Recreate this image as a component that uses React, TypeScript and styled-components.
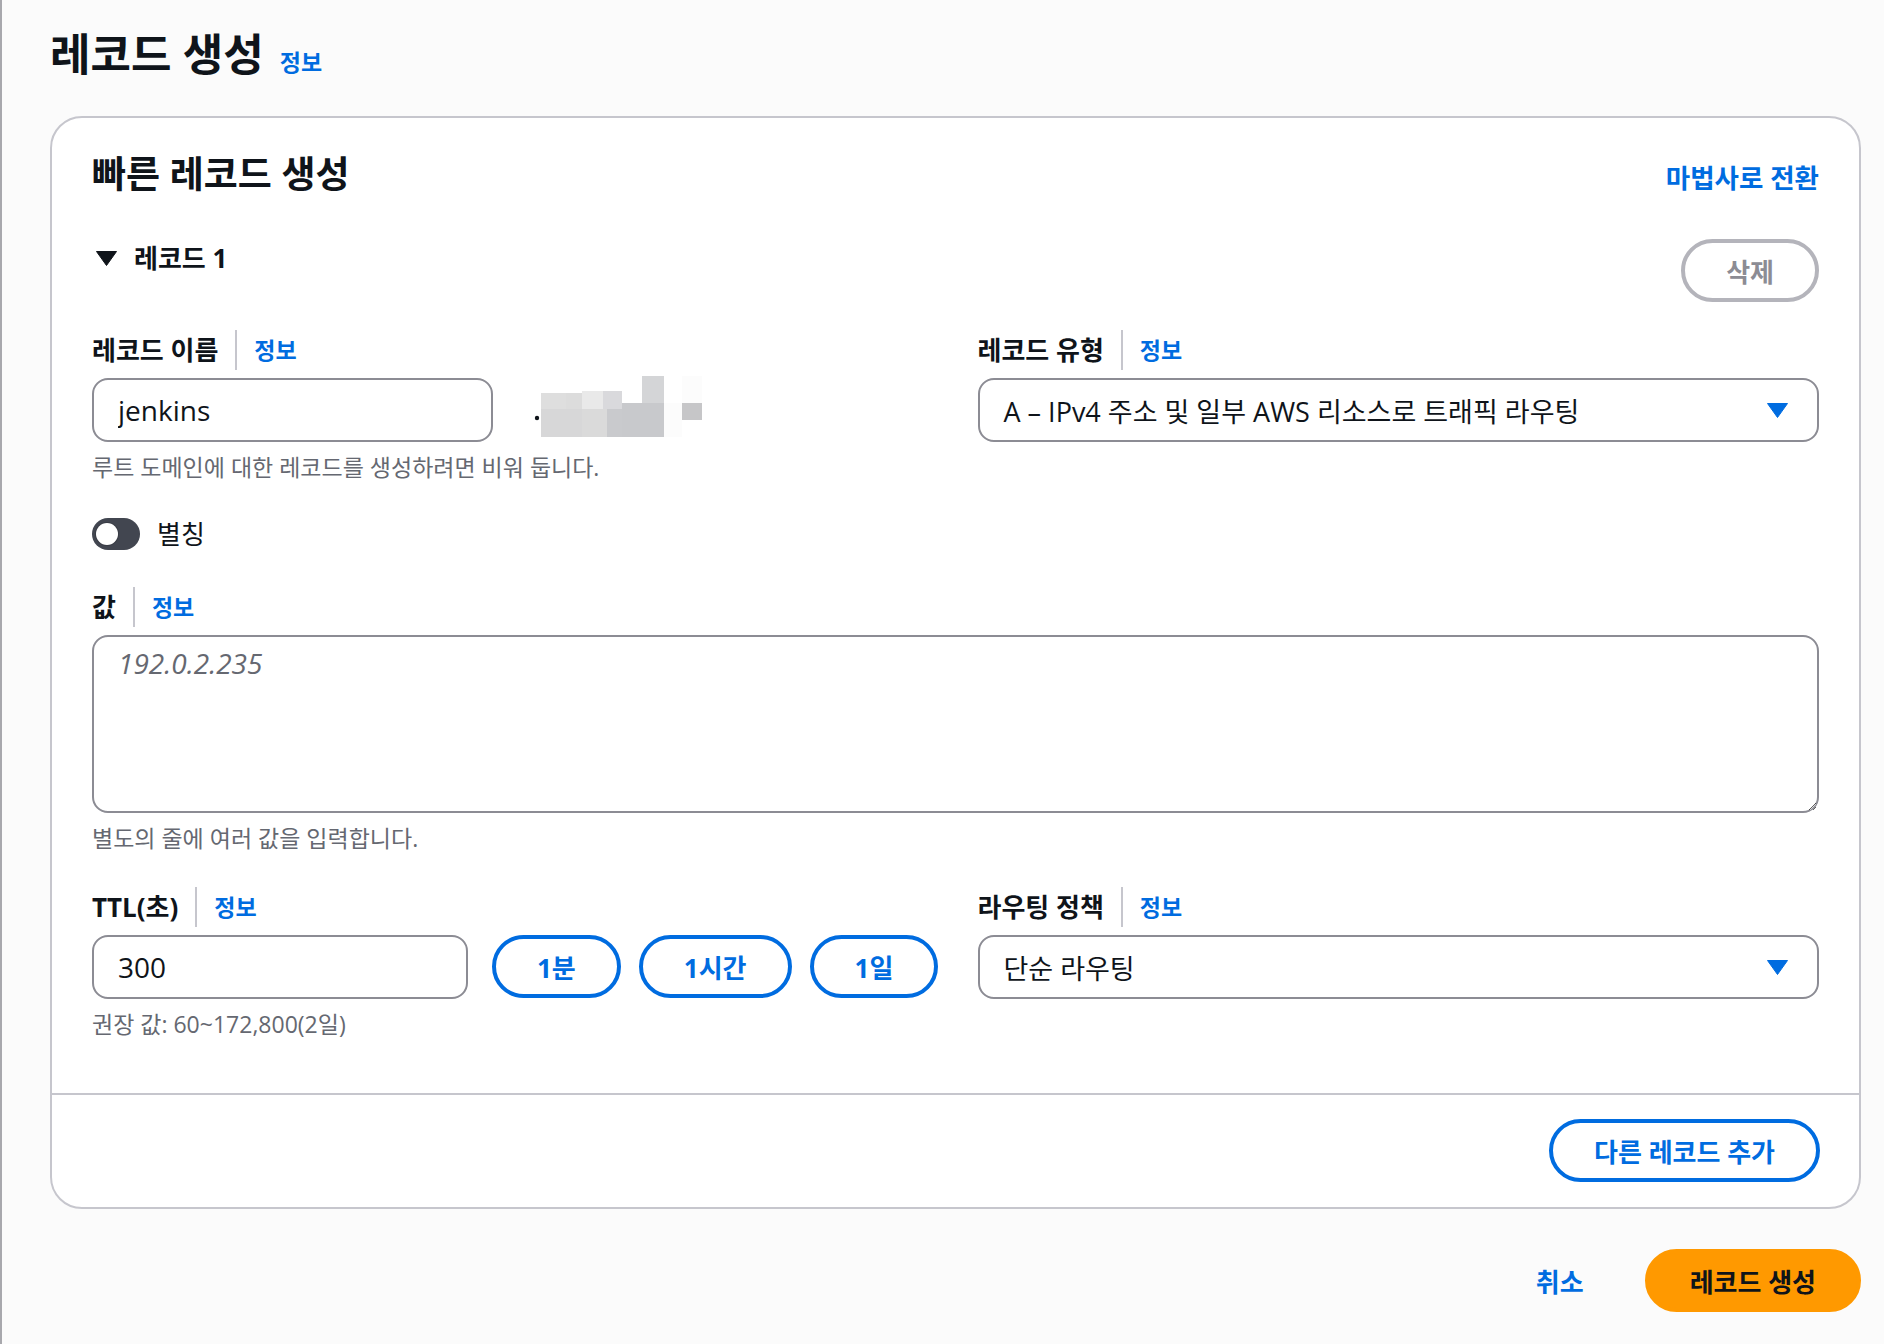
import React from 'react';
import styled, { createGlobalStyle } from 'styled-components';

const GlobalStyle = createGlobalStyle`
  * { box-sizing: border-box; }
  html, body {
    margin: 0;
    background: #fbfbfb;
  }
  body {
    font-family: "Open Sans", "Noto Sans CJK KR", sans-serif;
    color: #0f141a;
  }
`;

const Page = styled.div`
  min-height: 1344px;
  border-left: 2px solid #a8a8ad;
  padding: 27px 23px 0 48px;
`;

const TitleRow = styled.div`
  display: flex;
  align-items: baseline;
  gap: 16px;
`;

const PageTitle = styled.h1`
  margin: 0;
  font-size: 44px;
  line-height: 54px;
  font-weight: 700;
`;

const InfoLink = styled.a`
  font-size: 23px;
  line-height: 32px;
  font-weight: 700;
  color: #006ce0;
  text-decoration: none;
  cursor: pointer;
`;

const Card = styled.section`
  margin-top: 35px;
  background: #fff;
  border: 2px solid #c6c6cd;
  border-radius: 32px;
  overflow: hidden;
`;

const CardBody = styled.div`
  padding: 32px 40px 54px;
`;

const CardHeader = styled.div`
  display: flex;
  justify-content: space-between;
  align-items: baseline;
`;

const CardTitle = styled.h2`
  margin: 0;
  font-size: 37px;
  line-height: 47px;
  font-weight: 700;
`;

const HeaderLink = styled.a`
  font-size: 26.5px;
  font-weight: 700;
  color: #006ce0;
  text-decoration: none;
  cursor: pointer;
`;

const RecordHeader = styled.div`
  display: flex;
  justify-content: space-between;
  align-items: flex-start;
  margin-top: 42px;
`;

const RecordToggle = styled.div`
  display: flex;
  align-items: center;
  gap: 17px;
  padding-left: 4px;
  font-size: 26px;
  line-height: 38px;
  font-weight: 700;
`;

const PillButton = styled.button<{ $tone?: 'normal' | 'disabled' | 'primary' }>`
  flex-shrink: 0;
  height: 63px;
  padding: 0 41px;
  border-radius: 32px;
  border: 4px solid
    ${p => (p.$tone === 'disabled' ? '#b4b4bb' : p.$tone === 'primary' ? '#ff9900' : '#006ce0')};
  background: ${p => (p.$tone === 'primary' ? '#ff9900' : '#fff')};
  color: ${p => (p.$tone === 'disabled' ? '#8c8c94' : p.$tone === 'primary' ? '#0f141a' : '#006ce0')};
  font-family: inherit;
  font-size: 26px;
  font-weight: 700;
  white-space: nowrap;
  cursor: ${p => (p.$tone === 'disabled' ? 'default' : 'pointer')};
`;

const Grid = styled.div<{ $gap: number }>`
  display: grid;
  grid-template-columns: minmax(0, 1fr) minmax(0, 1fr);
  column-gap: 44px;
  margin-top: ${p => p.$gap}px;
`;

const Field = styled.div<{ $gap?: number }>`
  display: flex;
  flex-direction: column;
  min-width: 0;
  margin-top: ${p => p.$gap ?? 0}px;
`;

const LabelRow = styled.div`
  display: flex;
  align-items: center;
  height: 32px;
  margin-bottom: 12px;
`;

const Label = styled.label`
  font-size: 26px;
  line-height: 32px;
  font-weight: 700;
`;

const LabelDivider = styled.span`
  width: 2px;
  height: 40px;
  background: #c6c6cd;
  margin: 0 17px;
`;

const ControlRow = styled.div<{ $gap?: number }>`
  display: flex;
  align-items: flex-start;
  gap: ${p => p.$gap ?? 0}px;
`;

const TextInput = styled.input<{ $width: number; $after?: number }>`
  flex-shrink: 0;
  width: ${p => p.$width}px;
  height: 64px;
  margin-right: ${p => p.$after ?? 0}px;
  padding: 0 24px;
  border: 2px solid #8c8c94;
  border-radius: 16px;
  background: #fff;
  font-family: inherit;
  font-size: 28px;
  color: #0f141a;
  outline: none;
`;

const SelectBox = styled.div`
  display: flex;
  align-items: center;
  justify-content: space-between;
  height: 64px;
  padding: 0 29px 0 24px;
  border: 2px solid #8c8c94;
  border-radius: 16px;
  background: #fff;
  font-size: 27px;
  cursor: pointer;
`;

const TextArea = styled.textarea`
  display: block;
  width: 100%;
  height: 178px;
  padding: 7px 24px;
  border: 2px solid #8c8c94;
  border-radius: 16px;
  font-family: inherit;
  font-size: 28px;
  line-height: 38px;
  color: #0f141a;
  outline: none;

  &::placeholder {
    color: #656871;
    font-style: italic;
  }
`;

const Hint = styled.div`
  margin-top: 10px;
  font-size: 23px;
  line-height: 30px;
  color: #656871;
`;

const ToggleRow = styled.div`
  display: flex;
  align-items: center;
  gap: 17px;
  margin-top: 36px;
  font-size: 26px;
  line-height: 32px;
`;

const Track = styled.span`
  position: relative;
  width: 48px;
  height: 32px;
  border-radius: 16px;
  background: #424650;
`;

const Knob = styled.span`
  position: absolute;
  left: 4px;
  top: 5px;
  width: 22px;
  height: 22px;
  border-radius: 50%;
  background: #fff;
  box-shadow: 0 0 0 1px rgba(0, 0, 0, 0.15);
`;

const Mosaic = styled.svg`
  flex-shrink: 0;
  margin-left: 40px;
  margin-top: -2px;
`;

const CardFooter = styled.div`
  display: flex;
  justify-content: flex-end;
  border-top: 2px solid #c6c6cd;
  padding: 24px 39px 25px;
`;

const Actions = styled.div`
  display: flex;
  justify-content: flex-end;
  align-items: center;
  gap: 61px;
  margin-top: 40px;
`;

const CancelLink = styled.a`
  font-size: 26px;
  font-weight: 700;
  color: #006ce0;
  cursor: pointer;
`;

function Caret({ color }: { color: string }) {
  return (
    <svg width="21" height="15" viewBox="0 0 21 15">
      <polygon points="0.5,0.5 20.5,0.5 10.5,14.5" fill={color} stroke={color} strokeLinejoin="round" />
    </svg>
  );
}

const blocks = [
  { x: 109, y: 0, w: 22, h: 27, c: '#d4d5d7' },
  { x: 149, y: 0, w: 20, h: 27, c: '#fcfcfc' },
  { x: 8, y: 17, w: 25, h: 16, c: '#dedede' },
  { x: 33, y: 17, w: 16, h: 16, c: '#dcdcdc' },
  { x: 49, y: 15, w: 21, h: 18, c: '#e9e9e9' },
  { x: 70, y: 15, w: 19, h: 18, c: '#d9d9dc' },
  { x: 89, y: 27, w: 42, h: 34, c: '#c8c9cc' },
  { x: 74, y: 33, w: 15, h: 28, c: '#c9cacd' },
  { x: 131, y: 27, w: 18, h: 34, c: '#fcfcfc' },
  { x: 149, y: 27, w: 20, h: 17, c: '#c6c6c8' },
  { x: 8, y: 33, w: 41, h: 28, c: '#d7d7d8' },
  { x: 49, y: 33, w: 25, h: 28, c: '#dadada' },
];

function LabelLine({ text }: { text: string }) {
  return (
    <LabelRow>
      <Label>{text}</Label>
      <LabelDivider />
      <InfoLink>정보</InfoLink>
    </LabelRow>
  );
}

export default function App() {
  return (
    <>
      <GlobalStyle />
      <Page>
        <TitleRow>
          <PageTitle>레코드 생성</PageTitle>
          <InfoLink>정보</InfoLink>
        </TitleRow>

        <Card>
          <CardBody>
            <CardHeader>
              <CardTitle>빠른 레코드 생성</CardTitle>
              <HeaderLink>마법사로 전환</HeaderLink>
            </CardHeader>

            <RecordHeader>
              <RecordToggle>
                <Caret color="#0f141a" />
                <span>레코드 1</span>
              </RecordToggle>
              <PillButton $tone="disabled">삭제</PillButton>
            </RecordHeader>

            <Grid $gap={32}>
              <Field>
                <LabelLine text="레코드 이름" />
                <ControlRow>
                  <TextInput $width={401} defaultValue="jenkins" />
                  <Mosaic width="170" height="61" viewBox="0 0 170 61">
                    <circle cx="4" cy="42" r="2.2" fill="#0f141a" />
                    {blocks.map((b, i) => (
                      <rect key={i} x={b.x} y={b.y} width={b.w} height={b.h} fill={b.c} />
                    ))}
                  </Mosaic>
                </ControlRow>
                <Hint>루트 도메인에 대한 레코드를 생성하려면 비워 둡니다.</Hint>
                <ToggleRow>
                  <Track>
                    <Knob />
                  </Track>
                  <span>별칭</span>
                </ToggleRow>
              </Field>
              <Field>
                <LabelLine text="레코드 유형" />
                <SelectBox>
                  <span>A – IPv4 주소 및 일부 AWS 리소스로 트래픽 라우팅</span>
                  <Caret color="#006ce0" />
                </SelectBox>
              </Field>
            </Grid>

            <Field $gap={41}>
              <LabelLine text="값" />
              <TextArea placeholder="192.0.2.235" />
              <Hint>별도의 줄에 여러 값을 입력합니다.</Hint>
            </Field>

            <Grid $gap={38}>
              <Field>
                <LabelLine text="TTL(초)" />
                <ControlRow $gap={18}>
                  <TextInput $width={376} $after={6} defaultValue="300" />
                  <PillButton>1분</PillButton>
                  <PillButton>1시간</PillButton>
                  <PillButton>1일</PillButton>
                </ControlRow>
                <Hint>권장 값: 60~172,800(2일)</Hint>
              </Field>
              <Field>
                <LabelLine text="라우팅 정책" />
                <SelectBox>
                  <span>단순 라우팅</span>
                  <Caret color="#006ce0" />
                </SelectBox>
              </Field>
            </Grid>
          </CardBody>
          <CardFooter>
            <PillButton>다른 레코드 추가</PillButton>
          </CardFooter>
        </Card>

        <Actions>
          <CancelLink>취소</CancelLink>
          <PillButton $tone="primary">레코드 생성</PillButton>
        </Actions>
      </Page>
    </>
  );
}
